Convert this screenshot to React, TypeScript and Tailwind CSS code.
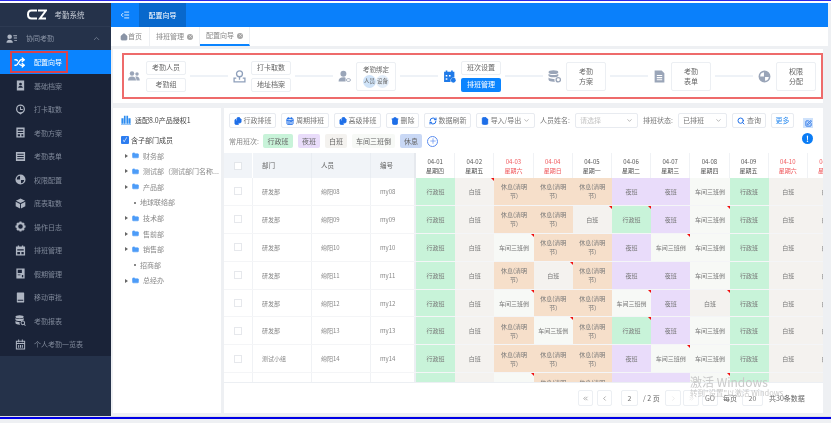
import React from 'react';
import {
  CalendarRange, ChevronDown, ChevronLeft, ChevronRight, ChevronUp, ChevronsLeft, ChevronsRight,
  FileText, Home, IndentDecrease, Plus, RefreshCw, Search, Shuffle, Trash2, X, Files, SquarePen, FolderClosed,
} from 'lucide-react';

type IconProps = { className?: string };

// 侧栏和向导的实心小图标
const Ico = ({ className, children }: IconProps & { children: React.ReactNode }) => (
  <svg viewBox="0 0 24 24" fill="currentColor" className={className}>
    {children}
  </svg>
);

const BookIcon = (p: IconProps) => (
  <Ico {...p}>
    <path fillRule="evenodd" d="M4 1h16v22H4zM12 6a3 3 0 1 0 0 6 3 3 0 0 0 0-6zM7 17c0-3 2-4 5-4s5 1 5 4z" />
  </Ico>
);
const ClockPinIcon = (p: IconProps) => (
  <Ico {...p}>
    <path fillRule="evenodd" d="M12 1a10 10 0 0 1 4 19l-4 3-4-3a10 10 0 0 1 4-19zm0 3a7 7 0 1 0 0 14 7 7 0 0 0 0-14zm-1 2h2v5h4v2h-6z" />
  </Ico>
);
const PlanIcon = (p: IconProps) => (
  <Ico {...p}>
    <path fillRule="evenodd" d="M3 1h18v22H3zM6 5v3h12V5zM6 11v2h12v-2zM6 16v4h5v-4zM14 16v4h4v-4z" />
  </Ico>
);
const FormIcon = (p: IconProps) => (
  <Ico {...p}>
    <path fillRule="evenodd" d="M2 2h20v20H2zM5 6v2h14V6zM5 11v2h14v-2zM5 16v2h14v-2z" />
  </Ico>
);
const PieIcon = (p: IconProps) => (
  <Ico {...p}>
    <path fillRule="evenodd" d="M12 1a11 11 0 1 1 0 22 11 11 0 0 1 0-22zm-1 3a8 8 0 0 0-7 8h7zm2 9v7a8 8 0 0 0 7-7z" />
  </Ico>
);
const CubeIcon = (p: IconProps) => (
  <Ico {...p}>
    <path d="M12 1l10 5-10 5L2 6zM1.500 8l9.500 5v10l-9.500-5zM22.500 8v10L13 23V13z" />
  </Ico>
);
const GearIcon = (p: IconProps) => (
  <Ico {...p}>
    <path fillRule="evenodd" d="M10 1h4l1 3 3-1 3 3-1 3 3 1v4l-3 1 1 3-3 3-3-1-1 3h-4l-1-3-3 1-3-3 1-3-3-1v-4l3-1-1-3 3-3 3 1zM12 7a5 5 0 1 0 0 10 5 5 0 0 0 0-10z" />
  </Ico>
);
const CalFillIcon = (p: IconProps) => (
  <Ico {...p}>
    <path fillRule="evenodd" d="M6 1h3v2h6V1h3v2h4v20H2V3h4zM5 9v3h14V9zM5 15v5h6v-5zM14 15v5h5v-5z" />
  </Ico>
);
const LeaveIcon = (p: IconProps) => (
  <Ico {...p}>
    <path fillRule="evenodd" d="M3 1h18v22H3zM6 4v7h9V4zM6 14v2h6v-2zM15 15v5h3v-5z" />
  </Ico>
);
const PhoneIcon = (p: IconProps) => (
  <Ico {...p}>
    <path fillRule="evenodd" d="M5 1h14a1 1 0 0 1 1 1v20a1 1 0 0 1-1 1H5a1 1 0 0 1-1-1V2a1 1 0 0 1 1-1zm1 16h12v2H6z" />
  </Ico>
);
const ReportIcon = (p: IconProps) => (
  <Ico {...p}>
    <ellipse cx="10" cy="4" rx="9" ry="3.500" />
    <path d="M1 6.500c2 3 16 3 18 0V11c-2 3-16 3-18 0zM1 13c2 2 7 2.500 9 2.400-.6 2-.2 4 1 5.600-5 .2-9-.8-10-3z" />
    <path fillRule="evenodd" d="M17 12a5 5 0 0 1 4 8l2.500 2.500-1.500 1.500-2.500-2.500A5 5 0 1 1 17 12zm0 2a3 3 0 1 0 0 6 3 3 0 0 0 0-6z" />
  </Ico>
);
const CalLineIcon = (p: IconProps) => (
  <svg viewBox="0 0 24 24" fill="none" stroke="currentColor" strokeWidth="2.200" className={p.className}>
    <path d="M3 5h18v17H3zM3 10h18M8 1v6M16 1v6M8 13v6M12 13v6M16 13v6" />
  </svg>
);
const TeamIcon = (p: IconProps) => (
  <Ico {...p}>
    <circle cx="8" cy="7" r="4.500" />
    <circle cx="18" cy="8" r="3.500" />
    <path d="M0 21c0-5 3-8 8-8s8 3 8 8zM17 21c0-3-.8-5.500-2.500-7.500 5-1.500 9 1.500 9 7.500z" />
  </Ico>
);
const AddressIcon = (p: IconProps) => (
  <svg viewBox="0 0 24 24" fill="none" stroke="currentColor" strokeWidth="2.400" className={p.className}>
    <circle cx="12" cy="7" r="5.500" />
    <path d="M12 12.500V18M6 15H2v7h20v-7h-4" />
  </svg>
);
const BindIcon = (p: IconProps) => (
  <Ico {...p}>
    <circle cx="10" cy="7" r="5.500" />
    <path d="M1 21c0-5 3.500-7.500 9-7.500 2 0 3 .3 4 .8V21z" />
    <rect x="15.500" y="16" width="7.500" height="5" rx="2.500" fill="none" stroke="currentColor" strokeWidth="1.500" />
  </Ico>
);
const ShiftIcon = (p: IconProps) => (
  <Ico {...p}>
    <path fillRule="evenodd" d="M5 1h3v2h7V1h3v2h3v11a6 6 0 0 0-7 8H2V3h3zM5 9v3h3V9zM11 9v3h3V9zM5 15v3h3v-3z" />
    <circle cx="19" cy="19" r="4.500" />
  </Ico>
);
const DbGearIcon = (p: IconProps) => (
  <Ico {...p}>
    <ellipse cx="10" cy="4" rx="9" ry="3.500" />
    <path d="M1 7c2 3 16 3 18 0v4c-2 3-16 3-18 0zM1 14c2 2.500 8 3 11 2.500-.4 2 0 3.500.8 5C7 22 2 21 1 18z" />
    <circle cx="19" cy="18" r="4" fill="none" stroke="currentColor" strokeWidth="2.500" />
  </Ico>
);
const DocIcon = (p: IconProps) => (
  <Ico {...p}>
    <path fillRule="evenodd" d="M3 1h13l5 5v17H3zM7 9v2h10V9zM7 13v2h10v-2zM7 17v2h10v-2z" />
  </Ico>
);
const OrgIcon = (p: IconProps) => (
  <Ico {...p}>
    <path d="M1 8h5v13H1zM7 2h4v19H7zM13 2h4v19h-4zM18 8h5v13h-5zM0 21.500h24V23H0z" />
  </Ico>
);
const CollabIcon = (p: IconProps) => (
  <Ico {...p}>
    <circle cx="8" cy="8" r="5" />
    <path d="M1 21c0-4 3-6.500 7-6.500s7 2.500 7 6.500zM16 5h8v2h-8zM17 10h7v2h-7zM18 15h6v2h-6z" />
  </Ico>
);

const menu = [
  { label: '基础档案', icon: BookIcon },
  { label: '打卡取数', icon: ClockPinIcon },
  { label: '考勤方案', icon: PlanIcon },
  { label: '考勤表单', icon: FormIcon },
  { label: '权限配置', icon: PieIcon },
  { label: '底表取数', icon: CubeIcon },
  { label: '操作日志', icon: GearIcon },
  { label: '排班管理', icon: CalFillIcon },
  { label: '假期管理', icon: LeaveIcon },
  { label: '移动审批', icon: PhoneIcon },
  { label: '考勤报表', icon: ReportIcon },
  { label: '个人考勤一览表', icon: CalLineIcon },
];

const days = [
  ['04-01', '星期四', false], ['04-02', '星期五', false], ['04-03', '星期六', true], ['04-04', '星期日', true],
  ['04-05', '星期一', false], ['04-06', '星期二', false], ['04-07', '星期三', false], ['04-08', '星期四', false],
  ['04-09', '星期五', false], ['04-10', '星期六', true], ['04-11', '星期日', true],
] as const;

// x 行政班 b 白班 r 休息 y 夜班 c 车间三班倒; 大写 = 有红色角标
const rows = [
  { dept: '研发部', name: '绵阳08', no: 'my08', cells: ['x', 'B', 'r', 'r', 'r', 'y', 'y', 'c', 'x', 'b', 'b'] },
  { dept: '研发部', name: '绵阳09', no: 'my09', cells: ['x', 'b', 'r', 'r', 'B', 'X', 'y', 'C', 'x', 'b', 'b'] },
  { dept: '研发部', name: '绵阳10', no: 'my10', cells: ['x', 'b', 'C', 'r', 'r', 'y', 'C', 'c', 'x', 'b', 'b'] },
  { dept: '研发部', name: '绵阳11', no: 'my11', cells: ['x', 'b', 'r', 'B', 'r', 'y', 'y', 'c', 'x', 'b', 'b'] },
  { dept: '研发部', name: '绵阳12', no: 'my12', cells: ['x', 'b', 'C', 'r', 'r', 'C', 'y', 'B', 'x', 'b', 'b'] },
  { dept: '研发部', name: '绵阳13', no: 'my13', cells: ['x', 'b', 'r', 'C', 'r', 'X', 'y', 'c', 'x', 'b', 'b'] },
  { dept: '测试小组', name: '绵阳14', no: 'my14', cells: ['x', 'b', 'r', 'r', 'r', 'y', 'C', 'c', 'x', 'b', 'b'] },
  { dept: '', name: '', no: '', cells: ['x', 'b', 'C', 'r', 'r', 'y', 'y', 'C', 'x', 'b', 'b'] },
];

const shift: Record<string, { text: string; bg: string }> = {
  x: { text: '行政班', bg: 'bg-[#c8f3d9]' },
  b: { text: '白班', bg: 'bg-[#f4f2ef]' },
  r: { text: '休息(清明节)', bg: 'bg-[#f6dfca]' },
  y: { text: '夜班', bg: 'bg-[#e9dcfa]' },
  c: { text: '车间三班倒', bg: 'bg-[#f7f9f6]' },
};

const tree = [
  { label: '财务部', folder: true },
  { label: '测试部（测试部门名称...', folder: true },
  { label: '产品部', folder: true },
  { label: '地球联络部', folder: false },
  { label: '技术部', folder: true },
  { label: '售前部', folder: true },
  { label: '销售部', folder: true },
  { label: '招商部', folder: false },
  { label: '总经办', folder: true },
];

const Line = () => <div className="h-[2px] w-[38px] shrink-0 bg-[#eef2f7]" />;

const StepBtn = ({ text, active }: { text: string; active?: boolean }) => (
  <div
    className={`flex h-[14px] w-[40px] items-center justify-center rounded-[2px] text-[7px] ${
      active ? 'bg-[#0a84ff] text-white' : 'border border-[#eceff3] bg-white text-[#666]'
    }`}
  >
    {text}
  </div>
);

const StepBox = ({ a, b }: { a: string; b: string }) => (
  <div className="flex h-[29px] w-[40px] flex-col items-center justify-center rounded-[2px] border border-[#eceff3] bg-white text-[7px] leading-[10px] text-[#666]">
    <span>{a}</span>
    <span>{b}</span>
  </div>
);

const ToolBtn = ({ icon: Icon, text, w, caret, solid }: { icon: React.ElementType; text: string; w: string; caret?: boolean; solid?: boolean }) => (
  <div className={`flex h-[15px] shrink-0 items-center justify-center gap-[2px] rounded-[2px] border border-[#e8ebf0] bg-white text-[7px] text-[#777] ${w}`}>
    <Icon size={8} strokeWidth={3} fill={solid ? '#1f6fe8' : 'none'} className="text-[#1f6fe8]" />
    <span className="whitespace-nowrap">{text}</span>
    {caret && <ChevronDown size={7} className="text-[#888]" />}
  </div>
);

const Select = ({ text, w, muted }: { text: string; w: string; muted?: boolean }) => (
  <div className={`flex h-[15px] shrink-0 items-center justify-between rounded-[2px] border border-[#e8ebf0] bg-white px-[4px] text-[7px] ${w} ${muted ? 'text-[#c4c4c4]' : 'text-[#777]'}`}>
    <span>{text}</span>
    <ChevronDown size={7} className="text-[#888]" />
  </div>
);

const Chip = ({ text, bg, w }: { text: string; bg: string; w: string }) => (
  <div className={`flex h-[14px] shrink-0 items-center justify-center rounded-[2px] text-[7px] text-[#666] ${bg} ${w}`}>{text}</div>
);

const PageBtn = ({ children, cls, faint }: { children: React.ReactNode; cls: string; faint?: boolean }) => (
  <div className={`flex h-[16px] shrink-0 items-center justify-center rounded-[2px] border border-[#eceff3] bg-white text-[7px] ${cls} ${faint ? 'text-[#ddd]' : 'text-[#777]'}`}>
    {children}
  </div>
);

export default function App() {
  return (
    <div
      className="flex h-[423px] w-[831px] flex-col overflow-hidden bg-[#eef0f3] blur-[0.45px]"
      style={{ fontFamily: '"Noto Sans CJK SC", "Liberation Sans", sans-serif' }}
    >
      <div className="h-[3px] shrink-0 border-t-[1px] border-[#2a2ae8] bg-white" />

      <div className="flex h-[413px] w-[828px] shrink-0">
        {/* sidebar */}
        <aside className="flex w-[111px] shrink-0 flex-col bg-[#25324a]">
          <div className="flex h-[24px] items-center justify-center gap-[8px] border-b border-[#2d3a52]">
            <svg viewBox="0 0 20 11" fill="none" stroke="white" strokeWidth="2" className="h-[11px] w-[20px]">
              <path d="M10 1.500H4.500C2 1.500 1 3 1 5.500S2 9.500 4.500 9.500H10M11 1.500h8L13 9.500h6" />
            </svg>
            <span className="text-[7.5px] text-[#c6ccd6]">考勤系统</span>
          </div>
          <div className="flex h-[23px] items-center pl-[6px] pr-[10px] text-[7px] text-[#8b95a7]">
            <CollabIcon className="mr-[9px] h-[11px] w-[11px] text-[#aeb6c4]" />
            <span className="flex-1">协同考勤</span>
            <ChevronUp size={9} className="text-[#7f8a9c]" />
          </div>
          <div className="relative flex h-[24px] items-center bg-[#0a84ff] pl-[14px] text-[7px] text-white">
            <Shuffle size={11} strokeWidth={3} className="mr-[9px]" />
            配置向导
            <span className="absolute left-[10px] top-[1px] h-[22px] w-[58px] border-2 border-[#d9434e]" />
          </div>
          <div className="flex h-[282px] flex-col bg-[#1a2338]">
            {menu.map((m) => (
              <div key={m.label} className="flex h-[23.5px] items-center pl-[15px] text-[7px] text-[#7f8899]">
                <m.icon className="mr-[8px] h-[11px] w-[11px] text-[#aeb5c2]" />
                {m.label}
              </div>
            ))}
          </div>
        </aside>

        <div className="flex min-w-0 flex-1 flex-col">
          {/* header */}
          <header className="flex h-[24px] shrink-0 items-center bg-[#0a80fb] text-white">
            <IndentDecrease size={10} className="ml-[9px] mr-[9px]" />
            <div className="flex h-full w-[47px] items-center justify-center bg-[#0868cc] text-[7px]">配置向导</div>
          </header>

          {/* tabs */}
          <div className="flex h-[19px] shrink-0 items-stretch bg-white text-[7px] text-[#888]">
            <div className="flex w-[39px] items-center justify-center border-r border-[#eef0f3] pl-[2px]">
              <Home size={8} fill="#8a94a6" className="text-[#8a94a6]" />
              首页
            </div>
            <div className="flex w-[50px] items-center justify-center gap-[3px] border-r border-[#eef0f3]">
              排班管理
              <span className="flex h-[6px] w-[6px] items-center justify-center rounded-full bg-[#a5a5a5]">
                <X size={5} className="text-white" />
              </span>
            </div>
            <div className="flex w-[50px] items-center justify-center gap-[3px] border-b-2 border-r border-b-[#0a84ff] border-r-[#eef0f3]">
              配置向导
              <span className="flex h-[6px] w-[6px] items-center justify-center rounded-full bg-[#a5a5a5]">
                <X size={5} className="text-white" />
              </span>
            </div>
          </div>

          {/* content */}
          <div className="flex min-h-0 flex-1 flex-col gap-[5px] pb-[3px] pl-[2px] pr-[5px] pt-[3px]">
            <section className="flex h-[54px] shrink-0 items-center bg-white pl-[9px]">
              <div className="flex h-[46px] w-full items-center gap-[4px] border-2 border-[#ee6b6b] pl-[4px]">
                <TeamIcon className="mr-[2px] h-[12px] w-[12px] shrink-0 text-[#9aa5b8]" />
                <div className="flex flex-col gap-[3px]">
                  <StepBtn text="考勤人员" />
                  <StepBtn text="考勤组" />
                </div>
                <Line />
                <AddressIcon className="mx-[1px] h-[13px] w-[13px] shrink-0 text-[#8fa0bb]" />
                <div className="flex flex-col gap-[3px]">
                  <StepBtn text="打卡取数" />
                  <StepBtn text="地址档案" />
                </div>
                <Line />
                <BindIcon className="mx-[1px] h-[13px] w-[13px] shrink-0 text-[#9aa5b8]" />
                <div className="flex h-[29px] w-[40px] flex-col items-center justify-center gap-[1px] rounded-[2px] border border-[#eceff3] text-[6.5px] leading-[9px] text-[#666]">
                  <span>考勤绑定</span>
                  <div className="flex">
                    <span className="flex h-[13px] w-[13px] items-center justify-center rounded-full bg-[#cfe3f8] text-[5.5px]">人员</span>
                    <span className="flex h-[13px] w-[13px] items-center justify-center rounded-full bg-[#e4eef9] text-[5.5px]">设备</span>
                  </div>
                </div>
                <Line />
                <ShiftIcon className="mx-[1px] h-[13px] w-[13px] shrink-0 text-[#1f7ae8]" />
                <div className="flex flex-col gap-[3px]">
                  <StepBtn text="班次设置" />
                  <StepBtn text="排班管理" active />
                </div>
                <Line />
                <DbGearIcon className="mx-[1px] h-[13px] w-[13px] shrink-0 text-[#9aa5b8]" />
                <StepBox a="考勤" b="方案" />
                <Line />
                <DocIcon className="mx-[1px] h-[13px] w-[13px] shrink-0 text-[#9aa5b8]" />
                <StepBox a="考勤" b="表单" />
                <Line />
                <PieIcon className="mx-[1px] h-[13px] w-[13px] shrink-0 text-[#9aa5b8]" />
                <StepBox a="权限" b="分配" />
              </div>
            </section>

            <div className="flex min-h-0 flex-1 gap-[3px]">
              {/* tree */}
              <section className="flex w-[108px] shrink-0 flex-col bg-white">
                <div className="flex h-[24px] items-center pl-[8px] text-[7px] text-[#444]">
                  <OrgIcon className="mr-[4px] h-[10px] w-[10px] text-[#2d8cf0]" />
                  适配8.0产品授权1
                </div>
                <div className="flex h-[16px] items-center pl-[8px] text-[7px] text-[#444]">
                  <span className="mr-[2px] flex h-[8px] w-[8px] items-center justify-center rounded-[1px] bg-[#2d7df0] text-[6px] leading-none text-white">✓</span>
                  含子部门成员
                </div>
                {tree.map((t) => (
                  <div key={t.label} className="flex h-[15.6px] items-center whitespace-nowrap pl-[12px] text-[7px] text-[#888]">
                    {t.folder ? (
                      <>
                        <span className="mr-[4px] border-y-[2px] border-l-[3px] border-y-transparent border-l-[#666]" />
                        <FolderClosed size={7} fill="#4d9cf8" className="mr-[4px] text-[#4d9cf8]" />
                      </>
                    ) : (
                      <span className="ml-[9px] mr-[4px] h-[2px] w-[2px] bg-[#888]" />
                    )}
                    {t.label}
                  </div>
                ))}
              </section>

              {/* schedule */}
              <section className="flex min-w-0 flex-1 flex-col overflow-hidden bg-white">
                <div className="relative h-[45px] shrink-0 px-[5px] pt-[5px]">
                  <div className="flex items-center gap-[5px]">
                    <ToolBtn icon={Files} text="行政排班" w="w-[47px]" solid />
                    <ToolBtn icon={CalendarRange} text="周期排班" w="w-[48px]" />
                    <ToolBtn icon={Files} text="高级排班" w="w-[47px]" solid />
                    <ToolBtn icon={Trash2} text="删除" w="w-[33px]" solid />
                    <ToolBtn icon={RefreshCw} text="数据刷新" w="w-[47px]" />
                    <ToolBtn icon={FileText} text="导入/导出" w="w-[59px]" caret solid />
                    <span className="whitespace-nowrap text-[7px] text-[#777]">人员姓名:</span>
                    <Select text="请选择" w="w-[63px]" muted />
                    <span className="whitespace-nowrap text-[7px] text-[#777]">排班状态:</span>
                    <Select text="已排班" w="w-[49px]" />
                    <ToolBtn icon={Search} text="查询" w="w-[34px]" />
                    <div className="flex h-[15px] w-[23px] shrink-0 items-center justify-center rounded-[2px] border border-[#e8ebf0] text-[7px] text-[#2d8cf0]">更多</div>
                  </div>
                  <div className="mt-[6px] flex items-center gap-[5px]">
                    <span className="w-[29px] shrink-0 whitespace-nowrap text-[7px] text-[#888]">常用班次:</span>
                    <Chip text="行政班" bg="bg-[#c8f3d9]" w="w-[30px]" />
                    <Chip text="夜班" bg="bg-[#e9dcfa]" w="w-[22px]" />
                    <Chip text="白班" bg="bg-[#f4f2ef]" w="w-[22px]" />
                    <Chip text="车间三班倒" bg="bg-[#f7f9f6]" w="w-[43px]" />
                    <Chip text="休息" bg="bg-[#c9d8f5]" w="w-[22px]" />
                    <span className="flex h-[11px] w-[11px] items-center justify-center rounded-full border border-[#5b8def]">
                      <Plus size={8} className="text-[#5b8def]" />
                    </span>
                  </div>
                  <span className="absolute right-[10px] top-[10px] flex h-[10px] w-[10px] items-center justify-center bg-[#cfe2fb]">
                    <SquarePen size={7} strokeWidth={3} className="text-[#1f6fe8]" />
                  </span>
                  <span className="absolute right-[10px] top-[25px] flex h-[11px] w-[11px] items-center justify-center rounded-full bg-[#0a7cf5] text-[8px] font-bold leading-none text-white">!</span>
                </div>

                <div className="flex h-[230px] shrink-0 flex-col overflow-hidden border-b border-[#eceff3]">
                  <div className="flex h-[25px] shrink-0">
                    <div className="flex w-[29px] shrink-0 items-center justify-center border-r border-white bg-[#f1f4f8]">
                      <span className="h-[8px] w-[8px] border border-[#e3e6ea] bg-white" />
                    </div>
                    <div className="flex w-[59px] shrink-0 items-center border-r border-[#e9edf2] bg-[#f1f4f8] pl-[9px] text-[6.5px] text-[#666]">部门</div>
                    <div className="flex w-[59px] shrink-0 items-center border-r border-[#e9edf2] bg-[#f1f4f8] pl-[9px] text-[6.5px] text-[#666]">人员</div>
                    <div className="flex w-[45px] shrink-0 items-center border-r-2 border-[#e6e9ee] bg-[#f1f4f8] pl-[9px] text-[6.5px] text-[#666]">编号</div>
                    {days.map(([d, w, red]) => (
                      <div
                        key={d}
                        className={`flex w-[39.2px] shrink-0 flex-col items-center justify-center border-r border-[#f0f2f5] text-[6px] leading-[9px] ${red ? 'text-[#f0595d]' : 'text-[#555]'}`}
                      >
                        <span>{d}</span>
                        <span>{w}</span>
                      </div>
                    ))}
                  </div>
                  {rows.map((r) => (
                    <div key={r.name || 'next'} className="flex h-[27.9px] shrink-0 border-b border-[#f4f5f7]">
                      <div className="flex w-[29px] shrink-0 items-center justify-center border-r border-[#f0f2f5]">
                        {r.name && <span className="h-[8px] w-[8px] border border-[#e6e8ec]" />}
                      </div>
                      <div className="flex w-[59px] shrink-0 items-center border-r border-[#f0f2f5] pl-[9px] text-[6px] text-[#888]">{r.dept}</div>
                      <div className="flex w-[59px] shrink-0 items-center border-r border-[#f0f2f5] pl-[9px] text-[6px] text-[#888]">{r.name}</div>
                      <div className="flex w-[45px] shrink-0 items-center border-r-2 border-[#eceff3] pl-[9px] text-[6px] text-[#888]">{r.no}</div>
                      {r.cells.map((c, i) => {
                        const s = shift[c.toLowerCase()];
                        return (
                          <div
                            key={i}
                            className={`relative flex w-[39.2px] shrink-0 items-center justify-center px-[4px] text-center text-[6px] leading-[9px] text-[#777] ${s.bg}`}
                          >
                            {s.text}
                            {c !== c.toLowerCase() && (
                              <span className="absolute right-0 top-0 border-l-[3px] border-t-[3px] border-l-transparent border-t-[#f01010]" />
                            )}
                          </div>
                        );
                      })}
                    </div>
                  ))}
                </div>

                <div className="relative flex flex-1 items-center pl-[354px] text-[7px] text-[#666]">
                  <PageBtn cls="w-[15px]"><ChevronsLeft size={7} /></PageBtn>
                  <PageBtn cls="ml-[4px] w-[15px]"><ChevronLeft size={7} /></PageBtn>
                  <PageBtn cls="ml-[9px] w-[17px]">2</PageBtn>
                  <span className="ml-[5px] w-[19px] whitespace-nowrap">/ 2 页</span>
                  <PageBtn cls="ml-[3px] w-[16px]" faint><ChevronRight size={7} /></PageBtn>
                  <PageBtn cls="ml-[2px] w-[16px]" faint><ChevronsRight size={7} /></PageBtn>
                  <PageBtn cls="ml-[3px] w-[16px]">GO</PageBtn>
                  <span className="ml-[5px] w-[14px] whitespace-nowrap">每页</span>
                  <PageBtn cls="ml-[5px] w-[21px]">20</PageBtn>
                  <span className="ml-[6px] whitespace-nowrap">共30条数据</span>
                  <div className="pointer-events-none absolute left-[466px] top-[-8px] whitespace-nowrap text-[#c9c9c9]">
                    <div className="text-[12px] leading-[13px]">激活 Windows</div>
                    <div className="text-[7.5px] leading-[10px]">转到"设置"以激活 Windows</div>
                  </div>
                </div>
              </section>
            </div>
          </div>
        </div>
      </div>

      <div className="h-px shrink-0 bg-[#dfe1e4]" />
      <div className="h-[2px] shrink-0 bg-[#0000e6]" />
    </div>
  );
}
